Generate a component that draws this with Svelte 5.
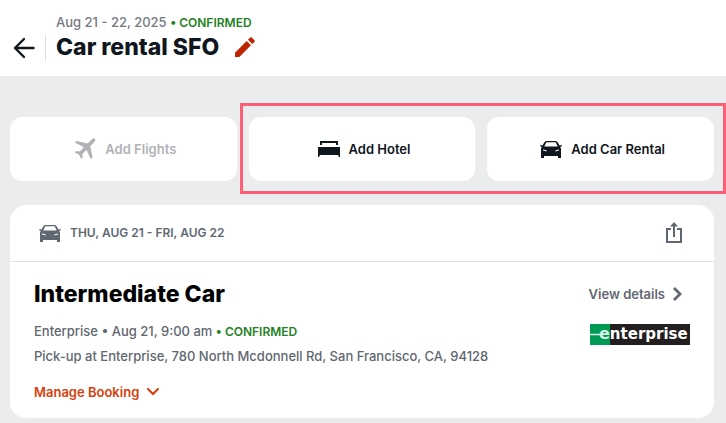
<script lang="ts">
    type Segment = { text: string; confirmed?: boolean }

    const trip = {
        title: 'Car rental SFO',
        dates: 'Aug 21 - 22, 2025',
        status: 'CONFIRMED'
    }

    const booking = {
        range: 'THU, AUG 21 - FRI, AUG 22',
        title: 'Intermediate Car',
        address: 'Pick-up at Enterprise, 780 North Mcdonnell Rd, San Francisco, CA, 94128'
    }

    const summary: Segment[] = [
        { text: 'Enterprise • Aug 21, 9:00 am' },
        { text: '• CONFIRMED', confirmed: true }
    ]
</script>

{#snippet carIcon()}
    <svg class="car" viewBox="0 0 22 17" aria-hidden="true">
        <path
            fill="currentColor"
            fill-rule="evenodd"
            d="M6 0h10l1.500 1 2 3.600 2-.6.500 1-1.800.9.800 1.600V17h-3v-2H4v2H1V7.500l.8-1.600L0 5 .5 4l2 .6L4.500 1zM6.300 1.200 4.300 5.400h13.400l-2-4.200zM3 8.500v1l4 1-.7-1.300zM19 8.500l-3.300.7-.7 1.300 4-1z"
        />
    </svg>
{/snippet}

<div class="page">
    <header class="header">
        <button class="icon-button back" aria-label="Back">
            <svg width="22" height="22" viewBox="0 0 22 22" aria-hidden="true">
                <path d="M20.500 11H2M11 2 2 11l9 9" fill="none" stroke="currentColor" stroke-width="2.400" stroke-linecap="round" stroke-linejoin="round" />
            </svg>
        </button>
        <div class="heading">
            <p class="dates">
                {trip.dates}
                <span class="confirmed">• {trip.status}</span>
            </p>
            <div class="title-row">
                <h1>{trip.title}</h1>
                <button class="icon-button edit" aria-label="Edit trip name">
                    <svg width="20" height="20" viewBox="0 0 20 20" aria-hidden="true">
                        <path fill="currentColor" d="M0 15.700 11.700 4l4.300 4.300L4.300 20H0zM13 2.700 15.100.600q.8-.8 1.600 0l2.700 2.700q.8.8 0 1.600L17.300 7z" />
                    </svg>
                </button>
            </div>
        </div>
    </header>

    <main>
        <div class="add-row">
            <button class="add" disabled>
                <svg width="22" height="22" viewBox="0 0 22 22" aria-hidden="true">
                    <path fill="currentColor" d="M20.800.700c.8.700.7 1.900-.1 2.800l-4.500 4.700 2.400 11.100-1.800 1.800-4.300-9-4.300 4.100.5 3.400-1.400 1.400-2.200-4.300-4.300-2.200 1.400-1.400 3.400.5 4.300-4.400L.800 4.500 2.600 2.900l11 2.600L18.200.900c.8-.8 1.900-.9 2.600-.2z" />
                </svg>
                Add Flights
            </button>
            <div class="highlighted">
                <button class="add">
                    <svg width="22" height="16" viewBox="0 0 22 16" aria-hidden="true">
                        <path fill="currentColor" d="M2 0h18v4h-2V2H4v2H2zM0 6h22v10h-1l-1-2H2l-1 2H0z" />
                    </svg>
                    Add Hotel
                </button>
                <button class="add">
                    {@render carIcon()}
                    Add Car Rental
                </button>
            </div>
        </div>

        <section class="card">
            <div class="card-top">
                <div class="range">
                    {@render carIcon()}
                    {booking.range}
                </div>
                <button class="icon-button share" aria-label="Share">
                    <svg width="18" height="22" viewBox="0 0 18 22" aria-hidden="true">
                        <path d="M6 7H2v13h14V7h-4M9 15V2" fill="none" stroke="currentColor" stroke-width="2" />
                        <path d="M9 0 13 4.500H5z" fill="currentColor" />
                    </svg>
                </button>
            </div>
            <div class="card-body">
                <div class="info">
                    <h2>{booking.title}</h2>
                    <p>
                        {#each summary as part}
                            <span class:confirmed={part.confirmed}>{part.text}</span>{' '}
                        {/each}
                    </p>
                    <p>{booking.address}</p>
                    <button class="manage">
                        Manage Booking
                        <svg width="12" height="8" viewBox="0 0 12 8" aria-hidden="true">
                            <path d="m1 1 5 5 5-5" fill="none" stroke="currentColor" stroke-width="2" stroke-linecap="round" />
                        </svg>
                    </button>
                </div>
                <div class="aside">
                    <a class="details" href="#details">
                        View details
                        <svg width="10" height="14" viewBox="0 0 10 14" aria-hidden="true">
                            <path d="m1 1 6 6-6 6" fill="none" stroke="currentColor" stroke-width="2.800" />
                        </svg>
                    </a>
                    <svg class="logo" width="100" height="21" viewBox="0 0 100 21" role="img" aria-label="Enterprise">
                        <path fill="#231f20" d="M0 0h100v21H0z" />
                        <path fill="#009a53" d="M0 0h20v21H0z" />
                        <path d="M0 10.500h10" stroke="#d9f2e5" stroke-width="1.500" />
                        <text class="logo-text" x="9" y="15"><tspan class="logo-e">e</tspan>nterprise</text>
                    </svg>
                </div>
            </div>
        </section>
    </main>
</div>

<style>
    :global(body) {
        margin: 0;
        background: #ebecee;
    }

    .page {
        font-family: Inter, 'Liberation Sans', sans-serif;
        font-size: 13px;
        line-height: 20px;
        color: #616771;
    }

    h1,
    h2,
    p {
        margin: 0;
    }

    button {
        margin: 0;
        padding: 0;
        border: 0;
        background: none;
        font: inherit;
        color: inherit;
        cursor: pointer;
    }

    svg {
        display: block;
        flex: none;
    }

    .icon-button {
        display: flex;
        align-items: center;
        justify-content: center;
    }

    .header {
        display: flex;
        align-items: flex-end;
        padding: 12px 13px 15px;
        background: #fff;
    }

    .back {
        height: 26px;
        padding-right: 10px;
        border-right: 1px solid #dfe0e4;
        color: #0f161e;
    }

    .heading {
        padding-left: 10px;
    }

    .dates {
        font-weight: 500;
        color: #757a82;
    }

    .confirmed {
        font-size: 12px;
        font-weight: 600;
        color: #24811f;
    }

    .title-row {
        display: flex;
        align-items: center;
        gap: 16px;
    }

    h1,
    h2 {
        font-size: 23px;
        line-height: 28px;
        font-weight: 800;
    }

    h1 {
        color: #0f161e;
    }

    .edit {
        color: #bd2500;
    }

    main {
        padding: 41px 12px 5px 10px;
    }

    .add-row {
        display: grid;
        grid-template-columns: repeat(3, 1fr);
        gap: 12px;
        margin-bottom: 24px;
    }

    .add {
        display: flex;
        align-items: center;
        justify-content: center;
        gap: 9px;
        height: 64px;
        padding-left: 4px;
        border-radius: 12px;
        background: #fff;
        font-weight: 600;
        color: #0f161e;
    }

    .add:disabled {
        color: #b0b2b5;
        cursor: default;
    }

    .highlighted {
        position: relative;
        display: grid;
        grid-column: span 2;
        grid-template-columns: 1fr 1fr;
        gap: 12px;
    }

    /* Callout frame round the two available options */
    .highlighted::after {
        content: '';
        position: absolute;
        inset: -14px -12px -13px -9px;
        border: 3px solid #ff5f74;
        pointer-events: none;
    }

    .car {
        width: 22px;
        height: 17px;
    }

    .card {
        border-radius: 16px;
        background: #fff;
    }

    .card-top {
        display: flex;
        align-items: center;
        justify-content: space-between;
        height: 56px;
        padding: 0 31px 0 29px;
        border-bottom: 1px solid #dfe0e4;
    }

    .range {
        display: flex;
        align-items: center;
        gap: 9px;
        font-size: 12px;
        font-weight: 600;
    }

    .card-body {
        display: flex;
        justify-content: space-between;
        padding: 18px 24px 16px;
    }

    h2 {
        margin-bottom: 11px;
        color: #000;
    }

    .info p {
        font-weight: 500;
        line-height: 25px;
    }

    .info .confirmed {
        font-weight: 600;
    }

    .manage {
        display: flex;
        align-items: center;
        gap: 8px;
        margin-top: 13px;
        font-weight: 600;
        color: #d9400b;
    }

    .aside {
        display: flex;
        flex-direction: column;
        align-items: flex-end;
        gap: 20px;
        padding-top: 4px;
    }

    .details {
        display: flex;
        align-items: center;
        gap: 8px;
        padding-right: 7px;
        font-weight: 600;
        color: inherit;
        text-decoration: none;
    }

    .logo-text {
        font-family: 'DejaVu Sans', sans-serif;
        font-size: 15px;
        font-weight: 700;
        fill: #fff;
    }

    .logo-e {
        font-size: 16px;
        fill: #d9f2e5;
    }
</style>
